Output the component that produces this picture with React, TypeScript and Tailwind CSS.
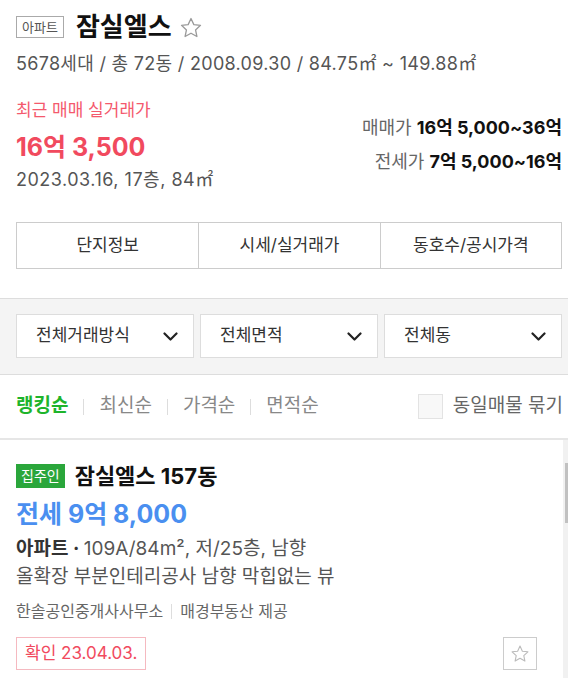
import React from "react";

const Star = ({ size, color }: { size: number; color: string }) => (
  <svg width={size} height={size} viewBox="0 0 24 24" fill="none">
    <path
      d="M12 2.5l2.85 6.1 6.65.75-4.95 4.55 1.35 6.6L12 17.2l-5.9 3.3 1.35-6.6L2.5 9.35l6.65-.75L12 2.5z"
      stroke={color}
      strokeWidth="1.3"
      strokeLinejoin="round"
    />
  </svg>
);

const Chevron = () => (
  <svg width="15" height="9" viewBox="0 0 15 9" fill="none">
    <path d="M1.5 1.5l6 6 6-6" stroke="#222" strokeWidth="2.2" strokeLinecap="round" strokeLinejoin="round" />
  </svg>
);

export default function App() {
  return (
    <div
      className="w-[568px] h-[678px] overflow-hidden bg-white text-[#333]"
      style={{ fontFamily: '"Inter", "Noto Sans CJK KR", sans-serif' }}
    >
      {/* header */}
      <div className="pl-4 pr-[6px] pt-[13px]">
        <div className="flex items-center h-[28px]">
          <span className="h-[22px] px-[5px] border border-[#aaa] text-[13px] leading-[20px] text-[#555]">
            아파트
          </span>
          <span className="ml-[12px] text-[26px] leading-[28px] font-bold text-[#111]">잠실엘스</span>
          <span className="ml-[7px] mt-[1px]">
            <Star size={24} color="#9a9a9a" />
          </span>
        </div>
        <div className="mt-[11px] text-[18px] leading-[24px] text-[#555] tracking-[0.3px]">
          5678세대 / 총 72동 / 2008.09.30 / 84.75㎡ ~ 149.88㎡
        </div>
        <div className="flex justify-between">
          <div className="flex flex-col">
            <div className="mt-[22px] text-[17px] leading-[24px] text-[#f4596d]">최근 매매 실거래가</div>
            <div className="mt-[9px] text-[25px] leading-[32px] font-bold text-[#f14a5e]">16억 3,500</div>
            <div className="mt-[5px] text-[18px] leading-[24px] text-[#555] tracking-[0.5px]">2023.03.16, 17층, 84㎡</div>
          </div>
          <div className="flex flex-col items-end mt-[40px]">
            <div className="text-[18px] leading-[24px]">
              <span className="text-[#666]">매매가 </span>
              <span className="font-bold text-[#111]">16억 5,000~36억</span>
            </div>
            <div className="mt-[10px] text-[18px] leading-[24px]">
              <span className="text-[#666]">전세가 </span>
              <span className="font-bold text-[#111]">7억 5,000~16억</span>
            </div>
          </div>
        </div>
        <div className="mt-[30px] grid grid-cols-3 h-[47px] border border-[#ccc]">
          <div className="flex items-center justify-center text-[17px] text-[#333]">단지정보</div>
          <div className="flex items-center justify-center text-[17px] text-[#333] border-l border-[#ccc]">시세/실거래가</div>
          <div className="flex items-center justify-center text-[17px] text-[#333] border-l border-[#ccc]">동호수/공시가격</div>
        </div>
      </div>

      {/* filter band */}
      <div className="mt-[29px] bg-[#f4f4f4] border-t border-b border-[#ddd] pl-4 pr-[6px] pt-[15px] pb-[16px]">
        <div className="grid grid-cols-3 gap-[6px]">
          {["전체거래방식", "전체면적", "전체동"].map((t) => (
            <div
              key={t}
              className="h-[44px] bg-white border border-[#ddd] flex items-center justify-between pl-[19px] pr-[15px]"
            >
              <span className="text-[17px] text-[#333]">{t}</span>
              <Chevron />
            </div>
          ))}
        </div>
      </div>

      {/* sort row */}
      <div className="h-[63px] flex items-center pl-4 pr-[5px] text-[19px]">
        <span className="font-bold text-[#1eb42b]">랭킹순</span>
        <span className="mx-[15px] w-px h-[16px] bg-[#ddd]" />
        <span className="text-[#888]">최신순</span>
        <span className="mx-[15px] w-px h-[16px] bg-[#ddd]" />
        <span className="text-[#888]">가격순</span>
        <span className="mx-[15px] w-px h-[16px] bg-[#ddd]" />
        <span className="text-[#888]">면적순</span>
        <span className="ml-auto w-[25px] h-[25px] bg-[#f8f8f8] border border-[#e3e3e3]" />
        <span className="ml-[10px] text-[#666]">동일매물 묶기</span>
      </div>
      <div className="h-[2px] bg-[#e6e6e6]" />

      {/* list */}
      <div className="flex">
        <div className="flex-1 pl-4 pr-[26px] pt-[24px]">
          <div className="flex items-center h-[24px]">
            <span className="h-[24px] px-[5px] bg-[#2aa63b] text-white text-[14px] leading-[24px]">집주인</span>
            <span className="ml-[10px] text-[22px] leading-[24px] font-bold text-[#111]">잠실엘스 157동</span>
          </div>
          <div className="mt-[11px] text-[25px] leading-[30px] font-bold text-[#4a8ff0]">전세 9억 8,000</div>
          <div className="mt-[8px] text-[19px] leading-[24px] text-[#555]">
            <span className="font-bold text-[#333]">아파트 · </span>109A/84m², 저/25층, 남향
          </div>
          <div className="mt-[4px] text-[19px] leading-[24px] text-[#555]">
            올확장 부분인테리공사 남향 막힙없는 뷰
          </div>
          <div className="mt-[11px] flex items-center text-[16px] leading-[22px] text-[#666]">
            <span>한솔공인중개사사무소</span>
            <span className="mx-[8px] w-px h-[15px] bg-[#ddd]" />
            <span>매경부동산 제공</span>
          </div>
          <div className="mt-[15px] flex items-center justify-between">
            <span className="h-[33px] px-[8px] border border-[#f5b9c0] text-[#f14a5e] text-[17px] leading-[31px]">
              확인 23.04.03.
            </span>
            <span className="w-[34px] h-[33px] border border-[#ccc] flex items-center justify-center">
              <Star size={20} color="#bbb" />
            </span>
          </div>
        </div>
        <div className="w-[5px] h-[240px] bg-[#f1f1f1] flex flex-col items-end">
          <div className="mt-[23px] w-[3px] h-[60px] bg-[#c1c1c1]" />
        </div>
      </div>
    </div>
  );
}
